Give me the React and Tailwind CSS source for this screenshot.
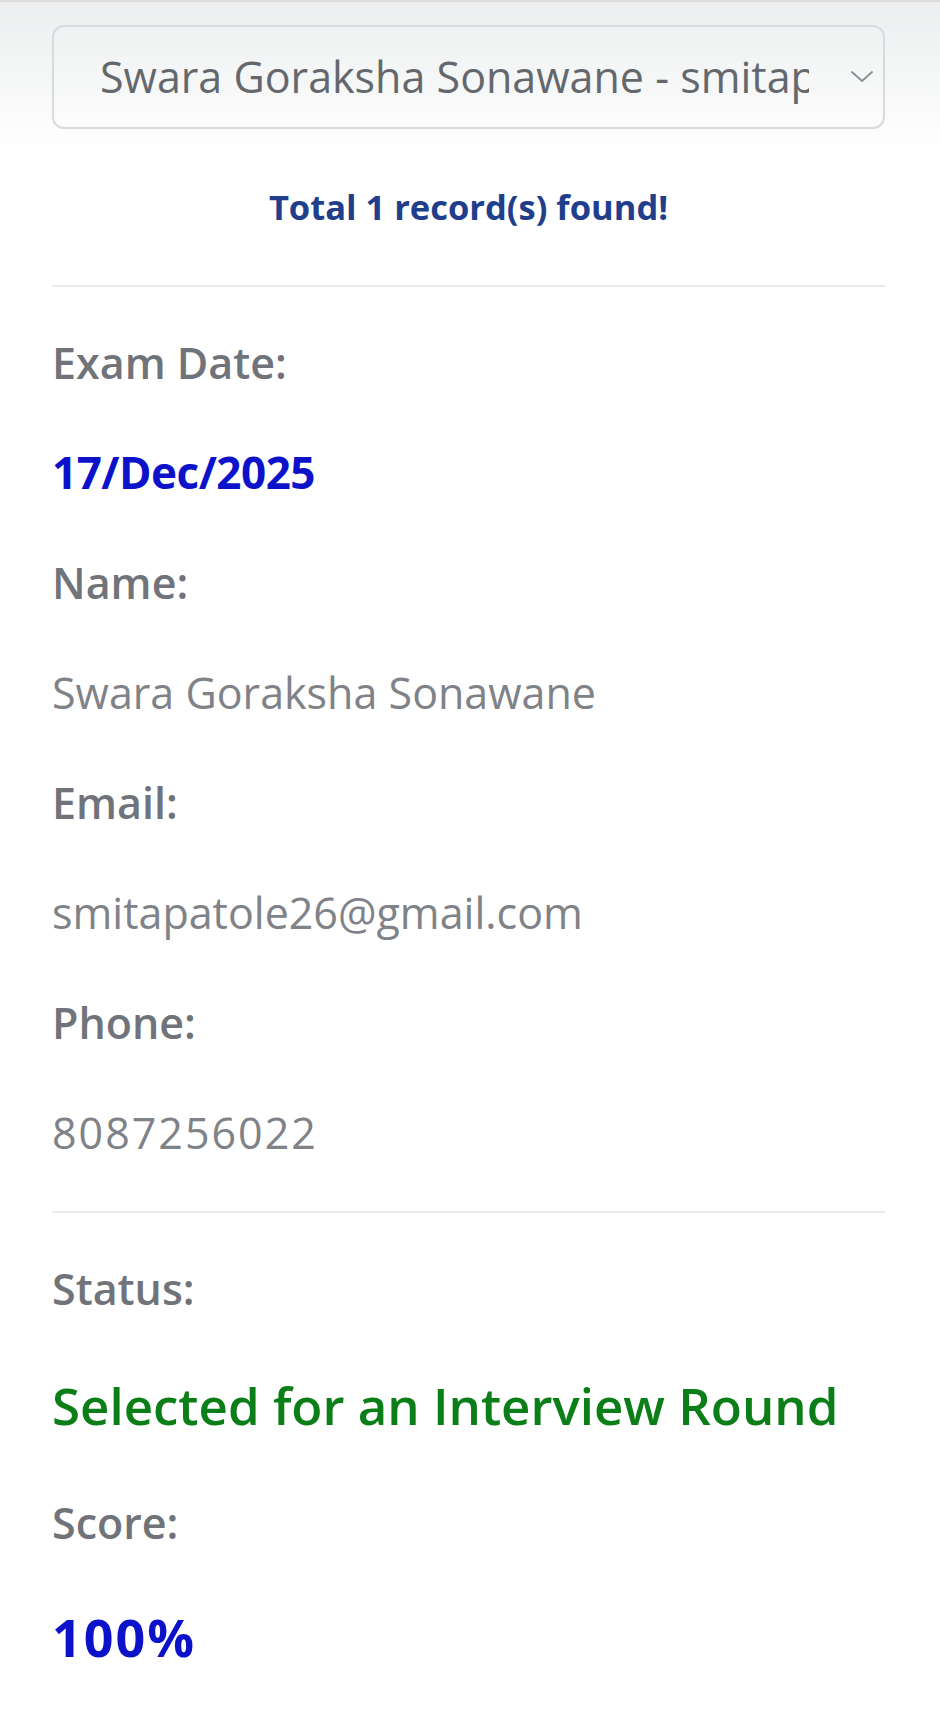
import React from "react";

const font = { fontFamily: '"Open Sans", "Lato", sans-serif' };

function Label({ children }) {
  return (
    <div className="h-[110px] flex items-center text-[43px] font-semibold text-[#707379] leading-none">
      {children}
    </div>
  );
}

function Value({ children, className = "" }) {
  return (
    <div className={"h-[110px] flex items-center text-[43px] text-[#7f8287] leading-none " + className}>
      {children}
    </div>
  );
}

export default function App() {
  return (
    <div
      className="w-[940px] min-h-[1718px] bg-[linear-gradient(to_bottom,#eceeef_0px,#ffffff_150px)] border-t-2 border-[#dcdcdc]"
      style={font}
    >
      <div className="pl-[52px] pr-[55px] pt-[23px]">
        {/* select */}
        <div className="h-[104px] border-2 border-[#d9dadd] rounded-[12px] flex items-center relative">
          <div className="ml-[46px] w-[709px] overflow-hidden whitespace-nowrap text-[43px] text-[#64686d] leading-[1.3]">
            Swara Goraksha Sonawane - smitapatole26@gmail.com
          </div>
          <svg
            className="absolute right-[8px] top-1/2 -translate-y-1/2"
            width="26"
            height="18"
            viewBox="0 0 26 18"
            fill="none"
          >
            <path d="M3 4 L13 13 L23 4" stroke="#8a8d92" strokeWidth="1.8" strokeLinecap="round" strokeLinejoin="round" />
          </svg>
        </div>

        {/* total */}
        <div className="h-[156px] flex items-center justify-center text-[34.5px] font-bold text-[#203e8b] leading-none">
          Total 1 record(s) found!
        </div>

        <div className="h-[2px] bg-[#e9eaec]" />

        <div className="pt-[20px]">
          <Label>Exam Date:</Label>
          <div className="h-[110px] flex items-center text-[44px] font-bold text-[#0c12c9] leading-none tracking-[-0.5px]">
            17/Dec/2025
          </div>
          <Label>Name:</Label>
          <Value>Swara Goraksha Sonawane</Value>
          <Label>Email:</Label>
          <Value>smitapatole26@gmail.com</Value>
          <Label>Phone:</Label>
          <Value className="tracking-[2px]">8087256022</Value>
        </div>

        <div className="mt-[24px] h-[2px] bg-[#e9eaec]" />

        <div className="pt-[20px]">
          <Label>Status:</Label>
          <div className="h-[124px] flex items-center text-[51px] font-semibold text-[#0b7e17] leading-none">
            Selected for an Interview Round
          </div>
          <Label>Score:</Label>
          <div className="h-[120px] flex items-center text-[52px] font-bold text-[#0c12c9] leading-none tracking-[2px]">
            100%
          </div>
        </div>
      </div>
    </div>
  );
}
